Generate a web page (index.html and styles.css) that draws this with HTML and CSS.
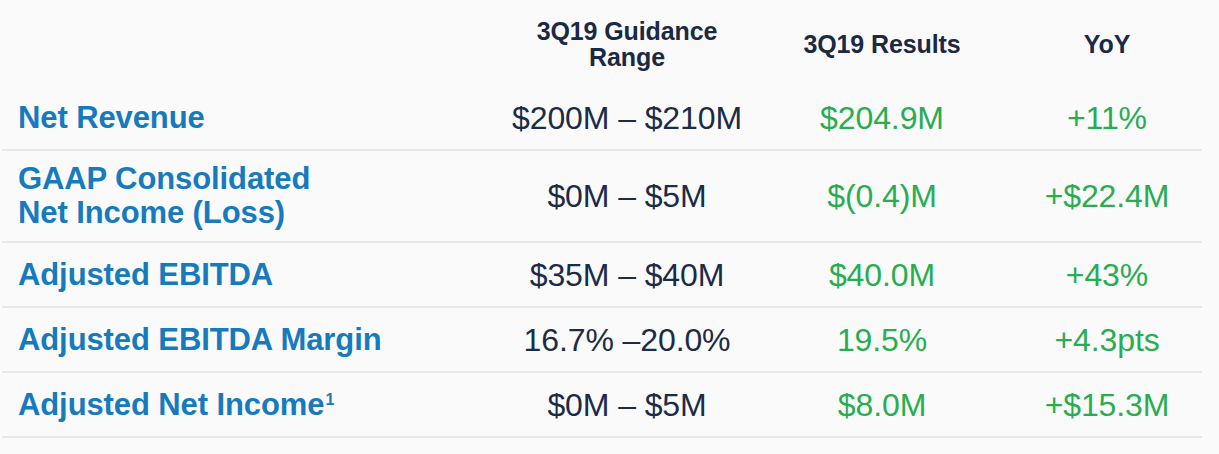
FILE: index.html
```html
<!DOCTYPE html>
<html lang="en">
<head>
<meta charset="utf-8">
<title>3Q19 Results</title>
<link rel="stylesheet" href="styles.css">
</head>
<body>
<div class="table">
  <div class="row head">
    <div class="cell"></div>
    <div class="cell hcell">3Q19 Guidance<br>Range</div>
    <div class="cell hcell">3Q19 Results</div>
    <div class="cell hcell">YoY</div>
  </div>
  <div class="row">
    <div class="cell label">Net Revenue</div>
    <div class="cell guide">$200M – $210M</div>
    <div class="cell result">$204.9M</div>
    <div class="cell result">+11%</div>
  </div>
  <div class="row tall">
    <div class="cell label">GAAP Consolidated<br>Net Income (Loss)</div>
    <div class="cell guide">$0M – $5M</div>
    <div class="cell result">$(0.4)M</div>
    <div class="cell result">+$22.4M</div>
  </div>
  <div class="row">
    <div class="cell label">Adjusted EBITDA</div>
    <div class="cell guide">$35M – $40M</div>
    <div class="cell result">$40.0M</div>
    <div class="cell result">+43%</div>
  </div>
  <div class="row">
    <div class="cell label">Adjusted EBITDA Margin</div>
    <div class="cell guide">16.7% –20.0%</div>
    <div class="cell result">19.5%</div>
    <div class="cell result">+4.3pts</div>
  </div>
  <div class="row">
    <div class="cell label">Adjusted Net Income<sup class="fn">1</sup></div>
    <div class="cell guide">$0M – $5M</div>
    <div class="cell result">$8.0M</div>
    <div class="cell result">+$15.3M</div>
  </div>
</div>
</body>
</html>
```
FILE: styles.css
```css
html, body {
  margin: 0;
  padding: 0;
  background: #fafafa;
}
body {
  font-family: "Liberation Sans", Arial, sans-serif;
  width: 1219px;
  height: 454px;
  overflow: hidden;
}
.table {
  margin-left: 2px;
  width: 1200px;
  display: flex;
  flex-direction: column;
}
.row {
  display: grid;
  grid-template-columns: 500px 250px 260px 190px;
  align-items: center;
  height: 63px;
  border-bottom: 2px solid #e8e8e8;
}
.row.head {
  height: 86px;
  border-bottom: none;
}
.row.tall {
  height: 90px;
}
.cell {
  text-align: center;
}
.hcell {
  font-size: 25px;
  line-height: 26px;
  font-weight: bold;
  letter-spacing: -0.1px;
  color: #1b2942;
  padding-top: 2px;
}
.label {
  text-align: left;
  padding-left: 16px;
  font-size: 31px;
  line-height: 34px;
  font-weight: bold;
  letter-spacing: -0.1px;
  color: #167abd;
}
.guide {
  font-size: 32px;
  line-height: 34px;
  letter-spacing: -0.1px;
  color: #1c2b46;
}
.result {
  font-size: 32px;
  line-height: 34px;
  letter-spacing: -0.1px;
  color: #28ad50;
}
.fn {
  font-size: 16px;
  line-height: 0;
  vertical-align: 10px;
  letter-spacing: 0;
  margin-left: 1px;
}
```
